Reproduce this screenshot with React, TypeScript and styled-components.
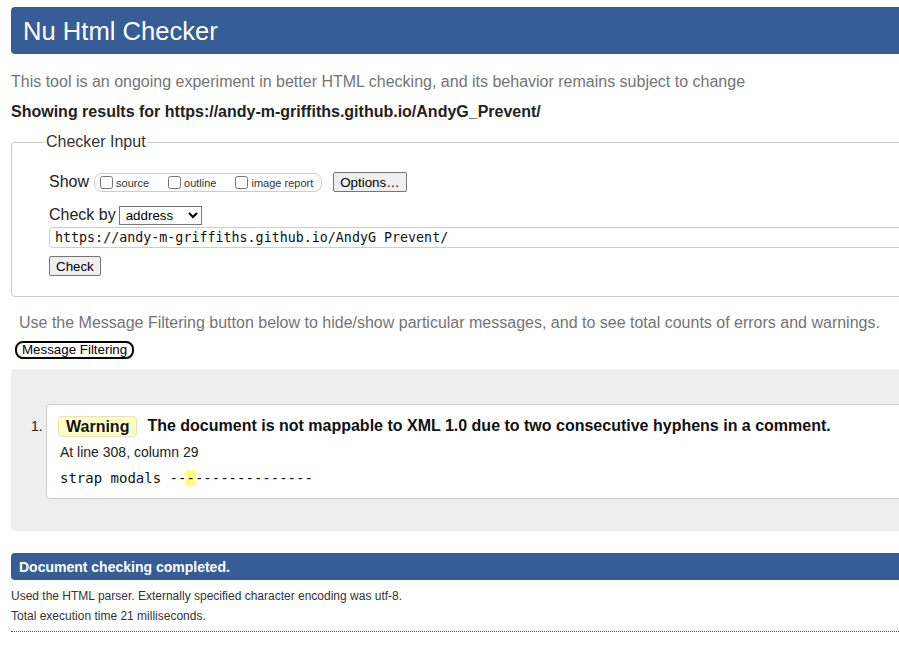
import React from "react";
import styled, { createGlobalStyle } from "styled-components";

const Global = createGlobalStyle`
  html, body {
    margin: 0;
    padding: 0;
    overflow: hidden;
    background: #fff;
  }
  body {
    font-family: "Liberation Sans", Arial, sans-serif;
    color: #222;
  }
`;

const Page = styled.div`
  width: 1100px;
  padding: 7px 0 0 11px;
`;

const Header = styled.header`
  height: 47px;
  background: #365d96;
  border-radius: 4px;
  display: flex;
  align-items: center;
  padding-left: 12px;
`;

const Title = styled.h1`
  margin: 0;
  font-size: 25.6px;
  font-weight: normal;
  color: #fff;
  line-height: 30px;
`;

const Intro = styled.p<{ $indent?: number }>`
  margin: ${(p) => (p.$indent ? "16px 0 0" : "18px 0 0")};
  padding-left: ${(p) => p.$indent ?? 0}px;
  font-size: 16px;
  line-height: 20px;
  color: #747474;
`;

const Showing = styled.p`
  margin: 10px 0 0;
  font-size: 16px;
  line-height: 20px;
  font-weight: bold;
  color: #222;
`;

const Fieldset = styled.fieldset`
  margin: 10px 0 0;
  padding: 19px 0 20px 37px;
  border: 1px solid #ccc;
  border-radius: 4px;
  min-width: 0;
`;

const Legend = styled.legend`
  padding: 0 1px;
  margin-left: -4px;
  font-size: 16px;
  line-height: 20px;
  color: #333;
`;

const Row = styled.div<{ $top?: number }>`
  display: flex;
  align-items: center;
  height: 22px;
  margin-top: ${(p) => p.$top ?? 0}px;
`;

const Label = styled.span`
  font-size: 16px;
  line-height: 20px;
  color: #222;
`;

const CheckGroup = styled.span`
  display: inline-flex;
  align-items: center;
  height: 17px;
  margin-left: 5px;
  padding: 0 0 0 5px;
  border: 1px solid #ccc;
  border-radius: 8px;
`;

const CheckItem = styled.label<{ $last?: boolean }>`
  display: inline-flex;
  align-items: center;
  margin-right: ${(p) => (p.$last ? 8 : 19)}px;
  font-size: 11px;
  color: #333;
  input {
    margin: 0 3px 0 0;
    width: 13px;
    height: 13px;
  }
  span {
    position: relative;
    top: 1px;
  }
`;

const Button = styled.button<{ $ml?: number }>`
  height: 20px;
  margin-left: ${(p) => p.$ml ?? 0}px;
  padding: 0 6px;
  font-family: "Liberation Sans", Arial, sans-serif;
  font-size: 13.33px;
  color: #000;
  background: #efefef;
  border: 1px solid #767676;
  border-radius: 2px;
`;

const Select = styled.select`
  margin-left: 3px;
  width: 83px;
  height: 19px;
  font-family: "Liberation Sans", Arial, sans-serif;
  font-size: 13.33px;
  color: #000;
  background: #fff;
  border: 1px solid #767676;
  border-radius: 0;
  padding: 0 2px;
`;

const UrlInput = styled.input`
  display: block;
  box-sizing: border-box;
  width: 1020px;
  height: 21px;
  margin-top: 1px;
  padding: 0 5px;
  font-family: "DejaVu Sans Mono", monospace;
  font-size: 13.33px;
  color: #111;
  border: 1px solid #ccc;
  border-radius: 4px;
  outline: none;
`;

const CheckRow = styled.div`
  margin-top: 8px;
  height: 20px;
  display: flex;
`;

const FilterButton = styled.button`
  display: block;
  height: 18px;
  margin: 8px 0 0 4px;
  padding: 0 5px;
  font-family: "Liberation Sans", Arial, sans-serif;
  font-size: 13.33px;
  line-height: 14px;
  color: #000;
  background: #fff;
  border: 2px solid #000;
  border-radius: 8px;
`;

const Results = styled.section`
  margin-top: 10px;
  padding: 35px 0 32px 20px;
  background: #eee;
  border-radius: 4px;
`;

const Item = styled.div`
  display: flex;
  align-items: flex-start;
`;

const Num = styled.span`
  width: 15px;
  margin-top: 11px;
  font-size: 14px;
  line-height: 22px;
  color: #222;
`;

const MessageBox = styled.div`
  flex: 1;
  background: #fff;
  border: 1px solid #ccc;
  border-radius: 4px;
  padding: 10px 13px 11px 13px;
`;

const MessageHead = styled.div`
  display: flex;
  align-items: center;
  height: 22px;
`;

const Badge = styled.span`
  display: inline-block;
  margin-left: -2px;
  padding: 0 7px;
  line-height: 19px;
  font-size: 16px;
  font-weight: bold;
  color: #111;
  background: #ffffc8;
  border: 1px solid #e2e2b4;
  border-radius: 4px;
`;

const MessageText = styled.span`
  margin-left: 10px;
  font-size: 16px;
  font-weight: bold;
  color: #111;
`;

const Location = styled.p`
  margin: 6px 0 0;
  font-size: 14px;
  line-height: 18px;
  color: #222;
`;

const Extract = styled.p`
  margin: 8px 0 0;
  font-family: "DejaVu Sans Mono", monospace;
  font-size: 14px;
  line-height: 18px;
  color: #111;
  white-space: pre;
`;

const Mark = styled.mark`
  background: #ffff77;
  color: inherit;
`;

const Done = styled.div`
  margin-top: 22px;
  height: 27px;
  display: flex;
  align-items: center;
  padding-left: 8px;
  background: #365d96;
  border-radius: 4px;
  color: #fff;
  font-size: 14px;
  font-weight: bold;
`;

const Detail = styled.p<{ $top: number }>`
  margin: ${(p) => p.$top}px 0 0;
  font-size: 12px;
  line-height: 16px;
  color: #333;
`;

const Rule = styled.hr`
  margin: 7px 0 0;
  border: 0;
  border-top: 1px dotted #555;
  height: 0;
`;

export default function App() {
  return (
    <>
      <Global />
      <Page>
        <Header>
          <Title>Nu Html Checker</Title>
        </Header>
        <Intro>
          This tool is an ongoing experiment in better HTML checking, and its behavior remains subject to change
        </Intro>
        <Showing>Showing results for https://andy-m-griffiths.github.io/AndyG_Prevent/</Showing>
        <Fieldset>
          <Legend>Checker Input</Legend>
          <Row>
            <Label>Show</Label>
            <CheckGroup>
              <CheckItem>
                <input type="checkbox" />
                <span>source</span>
              </CheckItem>
              <CheckItem>
                <input type="checkbox" />
                <span>outline</span>
              </CheckItem>
              <CheckItem $last>
                <input type="checkbox" />
                <span>image report</span>
              </CheckItem>
            </CheckGroup>
            <Button $ml={11}>Options…</Button>
          </Row>
          <Row $top={11}>
            <Label>Check by</Label>
            <Select defaultValue="address">
              <option value="address">address</option>
              <option value="file">file upload</option>
              <option value="text">text input</option>
            </Select>
          </Row>
          <UrlInput readOnly value="https://andy-m-griffiths.github.io/AndyG_Prevent/" />
          <CheckRow>
            <Button>Check</Button>
          </CheckRow>
        </Fieldset>
        <Intro $indent={8}>
          Use the Message Filtering button below to hide/show particular messages, and to see total counts of errors and warnings.
        </Intro>
        <FilterButton>Message Filtering</FilterButton>
        <Results>
          <Item>
            <Num>1.</Num>
            <MessageBox>
              <MessageHead>
                <Badge>Warning</Badge>
                <MessageText>
                  The document is not mappable to XML 1.0 due to two consecutive hyphens in a comment.
                </MessageText>
              </MessageHead>
              <Location>At line 308, column 29</Location>
              <Extract>
                {"strap modals --"}
                <Mark>-</Mark>
                {"--------------"}
              </Extract>
            </MessageBox>
          </Item>
        </Results>
        <Done>Document checking completed.</Done>
        <Detail $top={8}>Used the HTML parser. Externally specified character encoding was utf-8.</Detail>
        <Detail $top={4}>Total execution time 21 milliseconds.</Detail>
        <Rule />
      </Page>
    </>
  );
}
